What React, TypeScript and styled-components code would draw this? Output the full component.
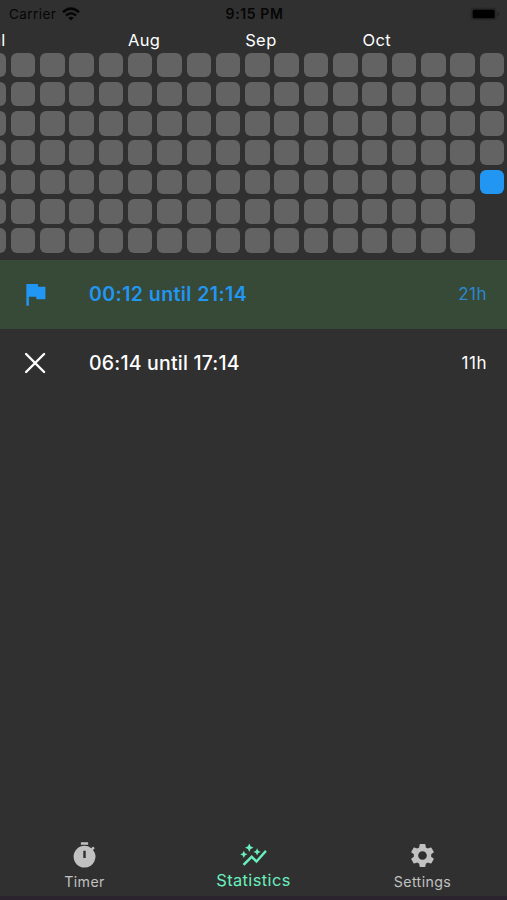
import React from "react";
import styled, { createGlobalStyle } from "styled-components";
import { MdFlag, MdTimer, MdAutoGraph, MdSettings } from "react-icons/md";

const Global = createGlobalStyle`
  * { box-sizing: border-box; }
  body { margin: 0; background: #303030; overflow: hidden; }
`;

const Screen = styled.div`
  display: flex;
  flex-direction: column;
  width: 507px;
  height: 900px;
  overflow: hidden;
  background: #303030;
  border-bottom: 4px solid #2b232d;
  font-family: Inter, "Liberation Sans", sans-serif;
  color: #fff;
`;

const StatusBar = styled.header`
  display: grid;
  grid-template-columns: 1fr auto 1fr;
  align-items: center;
  height: 28px;
  flex: none;
  padding: 0 7px 1px 9px;
  color: #060606;
  font-size: 13.5px;
`;

const Carrier = styled.div`
  display: flex;
  align-items: center;
  gap: 6px;
  letter-spacing: 0.45px;
`;

const Clock = styled.div`
  font-weight: 600;
  font-size: 14px;
  letter-spacing: 0.6px;
`;

const BatterySlot = styled.div`
  display: flex;
  justify-content: flex-end;
`;

const Months = styled.div`
  display: grid;
  grid-template-columns: repeat(18, 24.6px);
  column-gap: 4.73px;
  height: 24.5px;
  flex: none;
  margin-left: -18.7px;
  line-height: 24px;
  font-size: 16.5px;
  letter-spacing: 0.4px;
  white-space: nowrap;
`;

const Month = styled.span<{ $col: number }>`
  grid-column: ${(p) => p.$col};
  grid-row: 1;
`;

const HeatMap = styled.div`
  display: grid;
  grid-auto-flow: column;
  grid-template-rows: repeat(7, 24.6px);
  grid-auto-columns: 24.6px;
  gap: 4.73px;
  flex: none;
  height: 207.8px;
  margin-left: -18.7px;
`;

const Day = styled.div<{ $active: boolean }>`
  border-radius: 6px;
  background: ${(p) => (p.$active ? "#2196f3" : "#636363")};
`;

const Entry = styled.div<{ $goal?: boolean }>`
  display: flex;
  align-items: center;
  height: 68.4px;
  flex: none;
  padding: 0 20px;
  background: ${(p) => (p.$goal ? "#374937" : "transparent")};
  color: ${(p) => (p.$goal ? "#2196f3" : "#fff")};
`;

const EntryIcon = styled.div`
  display: flex;
  width: 69px;
`;

const Range = styled.div<{ $bold?: boolean }>`
  flex: 1;
  font-size: 19.5px;
  font-weight: ${(p) => (p.$bold ? 600 : 500)};
  letter-spacing: ${(p) => (p.$bold ? "0.42px" : "0.2px")};
`;

const Duration = styled.div<{ $dim?: boolean }>`
  font-size: 17px;
  letter-spacing: 0.5px;
  color: ${(p) => (p.$dim ? "#2c87cd" : "#fff")};
`;

const Filler = styled.main`
  flex: 1;
`;

const TabBar = styled.nav`
  display: grid;
  grid-template-columns: repeat(3, 1fr);
  height: 62px;
  flex: none;
`;

const Tab = styled.div<{ $active?: boolean }>`
  display: flex;
  flex-direction: column;
  align-items: center;
  padding-top: 7px;
  color: ${(p) => (p.$active ? "#69f0be" : "#c1c1c1")};
`;

const TabLabel = styled.span<{ $active?: boolean }>`
  margin-top: ${(p) => (p.$active ? "0" : "2px")};
  line-height: 20px;
  font-size: ${(p) => (p.$active ? "16.4px" : "14.2px")};
  letter-spacing: 0.4px;
`;

const days = Array.from({ length: 18 * 7 - 2 }, (_, i) => i);

const WifiIcon = () => (
  <svg width="18" height="14" viewBox="0 0 18 14" fill="none" stroke="currentColor" strokeWidth="2.5">
    <path d="M1 5.2Q9-2 17 5.2" />
    <path d="M4 8.5Q9 4 14 8.5" />
    <path d="M9 13.5 6.2 10.7Q9 8.6 11.8 10.7Z" fill="currentColor" stroke="none" />
  </svg>
);

const BatteryIcon = () => (
  <svg width="30" height="14" viewBox="0 0 30 14">
    <rect x="0.7" y="0.7" width="26" height="12.6" rx="3.5" fill="#272727" />
    <rect x="2.7" y="2.7" width="22" height="8.6" rx="1.5" fill="#000" />
    <path d="M27.7 4.8Q29.4 5.6 29.4 7T27.7 9.2Z" fill="#202020" />
  </svg>
);

const CloseIcon = () => (
  <svg width="30" height="30" viewBox="0 0 30 30" fill="none" stroke="currentColor" strokeWidth="2.4" strokeLinecap="round">
    <path d="M6.1 6 24.1 24M24.1 6 6.1 24" />
  </svg>
);

export default function App() {
  return (
    <Screen>
      <Global />
      <StatusBar>
        <Carrier>Carrier <WifiIcon /></Carrier>
        <Clock>9:15 PM</Clock>
        <BatterySlot><BatteryIcon /></BatterySlot>
      </StatusBar>
      <Months>
        <Month $col={1}>Jul</Month>
        <Month $col={6}>Aug</Month>
        <Month $col={10}>Sep</Month>
        <Month $col={14}>Oct</Month>
      </Months>
      <HeatMap>
        {days.map((d) => <Day key={d} $active={d === days.length - 1} />)}
      </HeatMap>
      <Entry $goal>
        <EntryIcon><MdFlag size={30.5} /></EntryIcon>
        <Range $bold>00:12 until 21:14</Range>
        <Duration $dim>21h</Duration>
      </Entry>
      <Entry>
        <EntryIcon><CloseIcon /></EntryIcon>
        <Range>06:14 until 17:14</Range>
        <Duration>11h</Duration>
      </Entry>
      <Filler />
      <TabBar>
        <Tab><MdTimer size={29} /><TabLabel>Timer</TabLabel></Tab>
        <Tab $active><MdAutoGraph size={29} /><TabLabel $active>Statistics</TabLabel></Tab>
        <Tab><MdSettings size={29} /><TabLabel>Settings</TabLabel></Tab>
      </TabBar>
    </Screen>
  );
}
